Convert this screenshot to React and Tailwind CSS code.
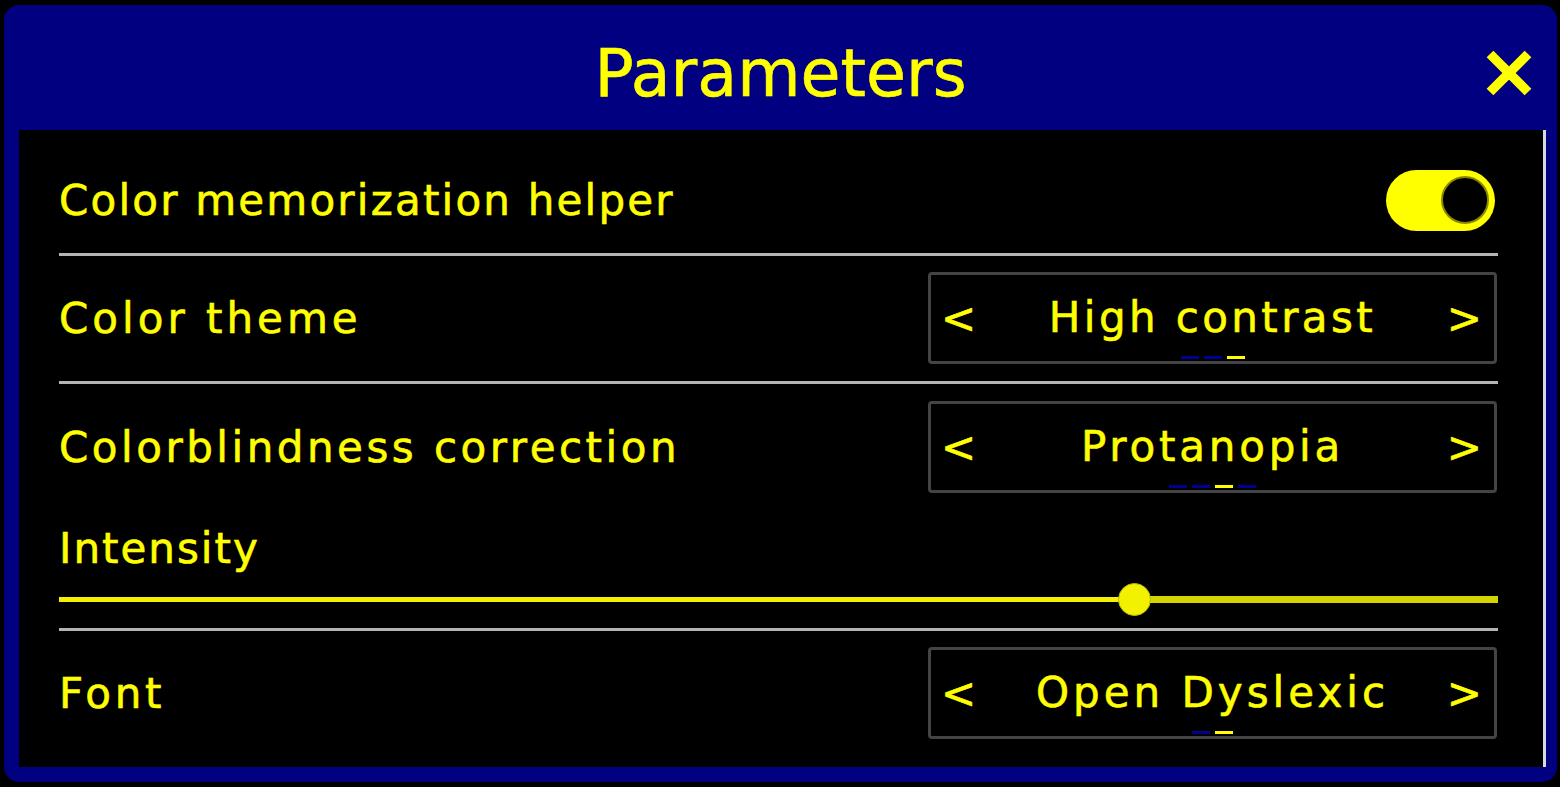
import React from "react";

const font = { fontFamily: '"DejaVu Sans", Verdana, sans-serif' };

function Dots({ items }) {
  return (
    <div className="absolute bottom-[2px] left-0 right-0 flex justify-center gap-[5px]">
      {items.map((c, i) => (
        <div
          key={i}
          className={c === "y" ? "h-[3px] w-[18px] bg-[#ffff00]" : "h-[3px] w-[18px] bg-[#000090]"}
        />
      ))}
    </div>
  );
}

function Selector({ value, dots, track }) {
  return (
    <div className="relative flex h-[92px] w-[569px] items-center justify-between rounded-[4px] border-[3px] border-[#444444] bg-black pl-[10px] pr-[10px] text-[42px] tracking-[2px] text-[#ffff00]">
      <span>&lt;</span>
      <span className={"pb-[2px] " + track}>{value}</span>
      <span>&gt;</span>
      <Dots items={dots} />
    </div>
  );
}

function Divider() {
  return <div className="h-[3px] w-full bg-[#b4b4b4]" />;
}

export default function App() {
  return (
    <div
      className="h-[787px] w-[1560px] overflow-hidden bg-black pl-[4px] pt-[5px] [-webkit-text-stroke:0.6px_#ffff00]"
      style={font}
    >
      <div className="flex h-[777px] w-[1553px] flex-col rounded-[15px] bg-[#000080]">
        <div className="relative flex h-[125px] items-center justify-center pt-[12px]">
          <h1 className="text-[65px] tracking-[0px] text-[#ffff00]">Parameters</h1>
          <button className="absolute right-[25px] top-[45px]">
            <svg width="46" height="46" viewBox="0 0 46 46">
              <line x1="4" y1="4" x2="42" y2="42" stroke="#ffff00" strokeWidth="9.5" />
              <line x1="42" y1="4" x2="4" y2="42" stroke="#ffff00" strokeWidth="9.5" />
            </svg>
          </button>
        </div>
        <div className="ml-[15px] mr-[11px] h-[637px] border-r-[3px] border-[#d8d8de] bg-black pl-[40px] pr-[45px] text-[42px] tracking-[2px] text-[#ffff00]">
          <div className="flex h-[123px] items-center justify-between pt-[17px]">
            <span className="tracking-[2.2px]">Color memorization helper</span>
            <div className="mr-[3px] flex h-[61px] w-[109px] items-center justify-end rounded-full bg-[#ffff00] pr-[6px]">
              <div className="h-[48px] w-[48px] rounded-full border-[2px] border-[#8a8a00] bg-black [-webkit-text-stroke:0]" />
            </div>
          </div>
          <Divider />
          <div className="flex items-center justify-between pb-[17px] pt-[16px]">
            <span className="tracking-[4px]">Color theme</span>
            <div className="mr-[1px]">
              <Selector value="High contrast" dots={["b", "b", "y"]} track="tracking-[3.4px]" />
            </div>
          </div>
          <Divider />
          <div className="pt-[17px] pb-[12px]">
            <div className="flex items-center justify-between">
              <span className="tracking-[3.5px]">Colorblindness correction</span>
              <div className="mr-[1px]">
                <Selector value="Protanopia" dots={["b", "b", "y", "b"]} track="tracking-[3.8px]" />
              </div>
            </div>
            <div className="mt-[31px] h-[50px] leading-[50px]">Intensity</div>
            <div className="relative mt-[8px] flex h-[34px] items-center">
              <div className="h-[5px] w-[1075px] bg-[#f2f200]" />
              <div className="h-[7px] flex-1 bg-[#d4d400]" />
              <div className="absolute left-[1059px] top-[1px] h-[33px] w-[33px] rounded-full border border-[#b8b800] bg-[#f2f200]" />
            </div>
          </div>
          <Divider />
          <div className="flex items-center justify-between pt-[16px]">
            <span className="tracking-[3.7px]">Font</span>
            <div className="mr-[1px]">
              <Selector value="Open Dyslexic" dots={["b", "y"]} track="tracking-[4px]" />
            </div>
          </div>
        </div>
      </div>
    </div>
  );
}
